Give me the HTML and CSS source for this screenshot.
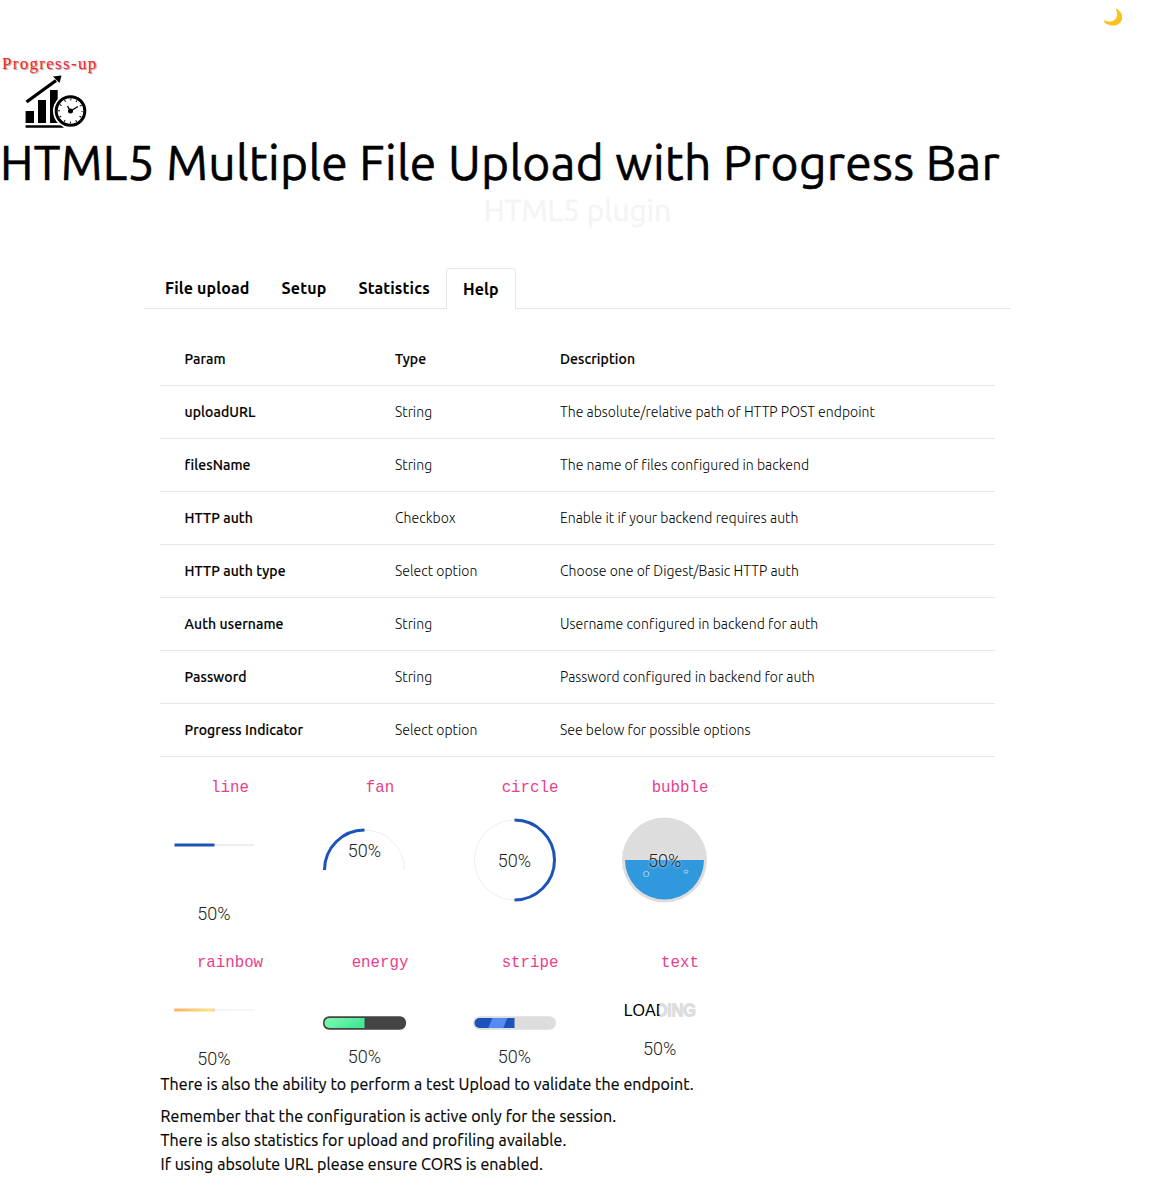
FILE: index.html
```html
<!DOCTYPE html>
<html lang="en">
<head>
<meta charset="utf-8">
<title>Progress-up</title>
<link rel="stylesheet" href="styles.css">
</head>
<body>
<header class="top">
  <button class="theme" aria-label="Toggle theme">
    <svg width="20" height="18" viewBox="0 0 20 18"><path d="M13.4.7C17.3 2.7 19.600 6 19.100 10.200C18.500 15 14.300 17.600 10 17.600C5.800 17.600 2.200 15.500.8 13.200C.6 12.600 1.100 12.200 1.800 12.500C5.500 14.300 9.600 14 12.200 11.300C14.800 8.600 14.800 5 12.900 1.600C12.600 .9 12.900.5 13.400.7Z" fill="#fcc21b"/></svg>
  </button>
</header>
<div class="brand">
  <span class="brand-name">Progress-up</span>
  <svg class="brand-icon" width="64" height="54" viewBox="0 0 64 54">
    <path d="M1.500 27 31 5.500" stroke="#000" stroke-width="3.400"/>
    <path d="M28 1.500 36.500.5 34.500 8Z"/>
    <path d="M.6 36h8.400v12H.6zM13 25h8v23h-8zM25 15h7.700v33H25zM.6 50.200h38v2.500H.6z"/>
    <circle cx="45.500" cy="36" r="17.500" fill="#fff"/>
    <circle cx="45.500" cy="36" r="14.300" fill="#fff" stroke="#000" stroke-width="3"/>
    <circle cx="45.500" cy="36" r="11.500" fill="none" stroke="#000" stroke-width="2" stroke-dasharray="1 5.021" stroke-dashoffset=".5"/>
    <circle cx="45.500" cy="36" r="2.500"/>
    <path d="M42.500 31.200 45.500 36 53 31.500" fill="none" stroke="#000" stroke-width="1.300"/>
  </svg>
</div>
<h1 class="title">HTML5 Multiple File Upload with Progress Bar</h1>
<p class="subtitle">HTML5 plugin</p>
<main class="panel">
  <nav class="tabs">
    <a class="tab">File upload</a><a class="tab">Setup</a><a class="tab">Statistics</a><a class="tab active">Help</a>
  </nav>
  <section class="help">
    <table class="params">
      <thead><tr><th class="c1">Param</th><th class="c2">Type</th><th>Description</th></tr></thead>
      <tbody>
        <tr><th>uploadURL</th><td>String</td><td>The absolute/relative path of HTTP POST endpoint</td></tr>
        <tr><th>filesName</th><td>String</td><td>The name of files configured in backend</td></tr>
        <tr><th>HTTP auth</th><td>Checkbox</td><td>Enable it if your backend requires auth</td></tr>
        <tr><th>HTTP auth type</th><td>Select option</td><td>Choose one of Digest/Basic HTTP auth</td></tr>
        <tr><th>Auth username</th><td>String</td><td>Username configured in backend for auth</td></tr>
        <tr><th>Password</th><td>String</td><td>Password configured in backend for auth</td></tr>
        <tr><th>Progress Indicator</th><td>Select option</td><td>See below for possible options</td></tr>
      </tbody>
    </table>
    <div class="demos">
      <figure class="demo"><code>line</code>
        <svg width="150" height="151"><path class="track" d="M19.500 46h80"/><path class="arc" d="M19.500 46h40"/><text x="59" y="121">50%</text></svg></figure>
      <figure class="demo"><code>fan</code>
        <svg width="150" height="151"><path class="track thin" d="M19.500 71a40 40 0 0 1 80 0"/><path class="arc" d="M19.500 71a40 40 0 0 1 40-40"/><text x="59.500" y="58">50%</text></svg></figure>
      <figure class="demo"><code>circle</code>
        <svg width="150" height="151"><circle class="track thin" cx="59.500" cy="61" r="40"/><path class="arc" d="M59.500 21a40 40 0 0 1 0 80"/><text x="59.500" y="68">50%</text></svg></figure>
      <figure class="demo"><code>bubble</code>
        <svg width="150" height="151"><circle cx="59.500" cy="61" r="42.500" fill="#ddd"/><path d="M20 61a39.500 39.500 0 0 0 79 0z" fill="#3099de"/><circle class="drop" cx="41.300" cy="75" r="2.700"/><ellipse class="drop" cx="81" cy="72.700" rx="2" ry="1.500"/><text class="glow" x="59.700" y="68">50%</text></svg></figure>
      <figure class="demo"><code>rainbow</code>
        <svg width="150" height="98"><defs><linearGradient id="warm"><stop offset="0" stop-color="#ffaf66"/><stop offset=".85" stop-color="#fbe285"/><stop offset="1" stop-color="#f3cd98"/></linearGradient></defs><path class="track faint" d="M19.500 36h80"/><rect x="19.300" y="34.500" width="40.500" height="3" fill="url(#warm)"/><text x="59" y="91">50%</text></svg></figure>
      <figure class="demo"><code>energy</code>
        <svg width="150" height="98"><defs><linearGradient id="mint" x2="1" y2=".4"><stop offset="0" stop-color="#84fab0"/><stop offset="1" stop-color="#43e997"/></linearGradient></defs><rect x="18" y="42.300" width="83" height="13.400" rx="6" fill="#444"/><path d="M59.500 44v10H24.500a5 5 0 0 1 0-10z" fill="url(#mint)"/><text x="59.500" y="89">50%</text></svg></figure>
      <figure class="demo"><code>stripe</code>
        <svg width="150" height="98"><rect x="18" y="42.300" width="83" height="13.400" rx="6.500" fill="#ddd"/><path d="M59.500 44v10H24.500a5 5 0 0 1 0-10z" fill="#1d52b9"/><path d="M37.300 44h15l-4 10h-15z" fill="#588bee"/><text x="59.500" y="89">50%</text></svg></figure>
      <figure class="demo"><code>text</code>
        <svg width="150" height="98"><defs><clipPath id="half"><path d="M0 0h54.500v98H0z"/></clipPath><clipPath id="rest"><path d="M54.500 0h95v98h-95z"/></clipPath></defs><text class="word ghost" x="18.700" y="42" clip-path="url(#rest)">LOADING</text><text class="word" x="18.700" y="42" clip-path="url(#half)">LOADING</text><text x="54.700" y="81">50%</text></svg></figure>
    </div>
    <p class="note">There is also the ability to perform a test Upload to validate the endpoint.</p>
    <p class="note">Remember that the configuration is active only for the session.<br>There is also statistics for upload and profiling available.<br>If using absolute URL please ensure CORS is enabled.</p>
  </section>
</main>
</body>
</html>
```
FILE: styles.css
```css
* { box-sizing: border-box; margin: 0; padding: 0; }
body { background: #fff; color: #000; font: 16px/24px Ubuntu, "Noto Sans", sans-serif; }
.top { height: 55px; display: flex; justify-content: flex-end; padding: 7.500px 32px 0 0; }
.theme { border: 0; background: none; height: 18px; display: block; }
.brand { width: 112px; height: 83px; display: flex; flex-direction: column; }
.brand-name { padding-left: 2px; height: 20px; font: 17px/17px "Liberation Serif", serif; letter-spacing: 1.3px; color: #f22; text-shadow: 1px 1px 1px #999; }
.brand-icon { margin-left: 25px; }
.title { font-size: 48px; line-height: 48px; font-weight: 400; letter-spacing: .31px; -webkit-text-stroke: .6px #000; white-space: nowrap; }
.subtitle { font-size: 30px; line-height: 49px; text-align: center; color: #f3f4f6; letter-spacing: .05px; -webkit-text-stroke: .3px #f3f4f6; }
.panel { width: 867px; margin: 33px auto 0; }
.tabs { display: flex; align-items: flex-end; height: 41px; padding-left: 5px; border-bottom: 1px solid #e5e7eb; }
.tab { padding: 8px 16px; font-weight: 700; letter-spacing: .14px; white-space: nowrap; }
.tab.active { height: 41px; margin-bottom: -1px; border: 1px solid #e5e7eb; border-bottom: 0; border-radius: 4px 4px 0 0; background: #fff; }
.help { padding: 24px 16px; }
.params { width: 835px; table-layout: fixed; border-collapse: collapse; font-size: 14px; line-height: 20px; text-align: left; }
.params th, .params td { padding: 16px 24px; border-bottom: 1px solid #e5e7eb; white-space: nowrap; }
.params th { font-weight: 500; letter-spacing: .1px; -webkit-text-stroke: .15px #000; }
.params th:first-child { padding-left: 24.500px; }
.params td { font-weight: 300; letter-spacing: .025px; }
.c1 { width: 211px; }
.c2 { width: 165px; }
.demos { display: grid; grid-template-columns: repeat(4, 150px); margin: 18px 0 0 -5px; }
.demo { display: flex; flex-direction: column; }
.demo code { height: 24px; text-align: center; font: 15.750px/26px "Liberation Mono", monospace; color: #e83e8c; }
.demo svg { display: block; }
.demo text { font: 300 18px Roboto, sans-serif; text-anchor: middle; fill: #222; }
.demo .word { font: 400 16px "Liberation Sans", sans-serif; text-anchor: start; fill: #000; }
.demo .ghost { fill: #ddd; stroke: #ddd; stroke-width: 1.800px; }
.demo .glow { text-shadow: 0 0 3px #fff; }
.track { fill: none; stroke: #eee; stroke-width: 2px; }
.thin { stroke-width: 1px; }
.faint { stroke: #f5f5f5; }
.arc { fill: none; stroke: #1d52b9; stroke-width: 3px; }
.drop { fill: none; stroke: #a5d4f3; stroke-width: 1px; }
.note { margin-bottom: 8px; padding-left: .5px; letter-spacing: .095px; -webkit-text-stroke: .2px #000; }
```
